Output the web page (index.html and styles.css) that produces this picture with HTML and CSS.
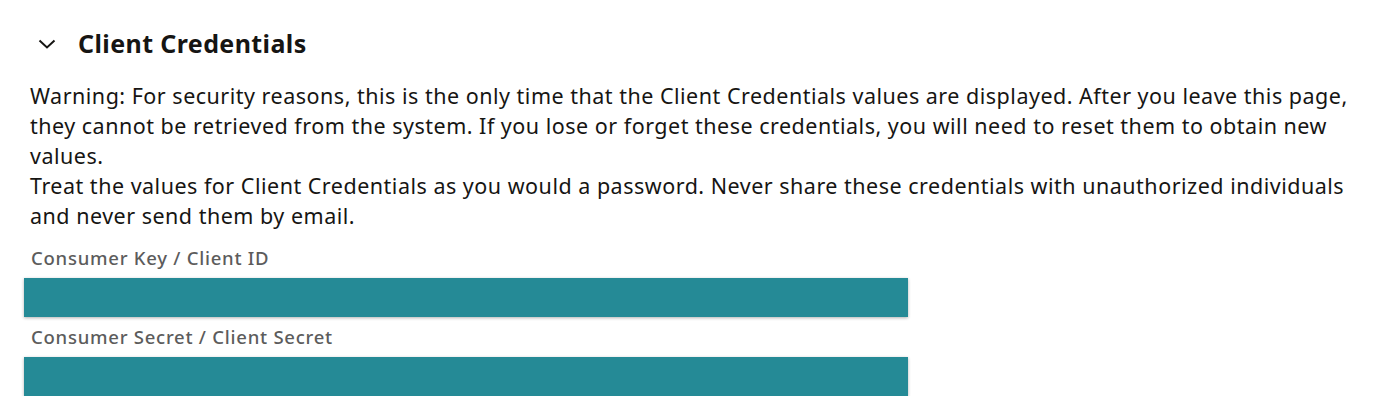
FILE: index.html
```html
<!DOCTYPE html>
<html lang="en">
<head>
  <meta charset="UTF-8">
  <title>Client Credentials</title>
  <link rel="stylesheet" href="styles.css">
</head>
<body>
  <section class="panel">
    <div class="panel-header">
      <svg class="chevron" width="18" height="10" viewBox="0 0 18 10">
        <path d="M1.5 1.5 L9 8.5 L16.5 1.5" fill="none" stroke="#161513" stroke-width="2"/>
      </svg>
      <h2>Client Credentials</h2>
    </div>

    <div class="warning">
      <p>Warning: For security reasons, this is the only time that the Client Credentials values are displayed. After you leave this page, they cannot be retrieved from the system. If you lose or forget these credentials, you will need to reset them to obtain new values.</p>
      <p>Treat the values for Client Credentials as you would a password. Never share these credentials with unauthorized individuals and never send them by email.</p>
    </div>

    <div class="field">
      <label>Consumer Key / Client ID</label>
      <div class="value-bar"></div>
    </div>
    <div class="field">
      <label>Consumer Secret / Client Secret</label>
      <div class="value-bar"></div>
    </div>
  </section>
</body>
</html>
```

FILE: styles.css
```css
body {
  margin: 0;
  font-family: 'Noto Sans', 'Open Sans', sans-serif;
  background-color: #ffffff;
  color: #161513;
}

.panel {
  padding: 27px 22px 0 24px;
}

.panel-header {
  display: flex;
  align-items: center;
  height: 32px;
  padding-left: 14px;
}

.chevron {
  margin-right: 22px;
  margin-top: 2px;
}

.panel-header h2 {
  margin: 0;
  font-size: 25px;
  line-height: 32px;
  font-weight: bold;
  letter-spacing: 0.4px;
}

.warning {
  margin-top: 22px;
  padding-left: 6px;
  font-size: 21.5px;
  line-height: 30px;
  letter-spacing: 0.5px;
}

.warning p {
  margin: 0;
}

.field {
  margin-top: 15px;
}

.field + .field {
  margin-top: 8px;
}

.field label {
  display: block;
  padding-left: 7px;
  margin-bottom: 8px;
  font-size: 18.5px;
  line-height: 24px;
  font-weight: 500;
  letter-spacing: 0.75px;
  color: #5c5c5c;
}

.value-bar {
  width: 884px;
  height: 39px;
  background-color: #258a96;
  box-shadow: 0 1px 3px rgba(0, 0, 0, 0.3);
}
```
